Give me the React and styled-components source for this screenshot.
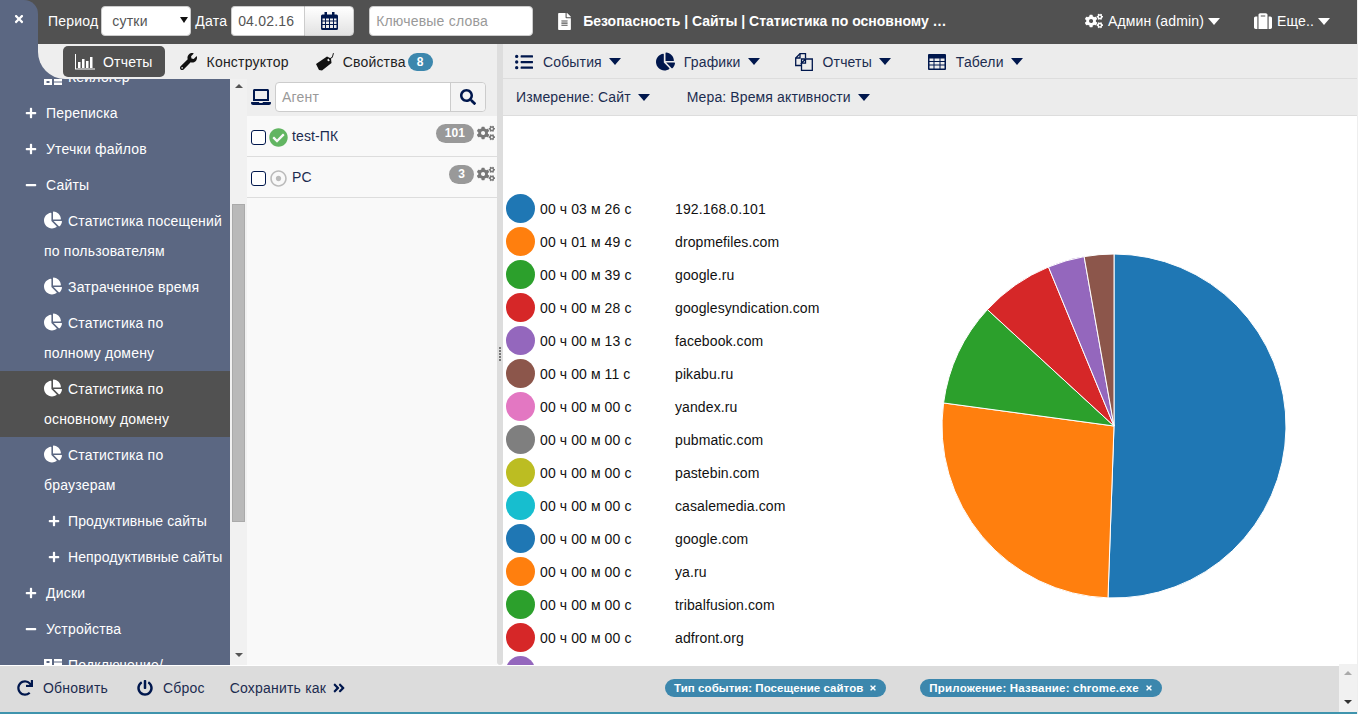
import styled, { createGlobalStyle } from "styled-components";
import {
  FaTimes, FaFileAlt, FaCogs, FaSuitcase, FaWrench,
  FaLaptop, FaSearch, FaCheckCircle, FaRegDotCircle, FaListUl, FaChartPie,
  FaRedo, FaPowerOff, FaAngleDoubleRight, FaPlus, FaMinus,
} from "react-icons/fa";

const GlobalStyle = createGlobalStyle`
  html, body { margin: 0; height: 100%; overflow: hidden; background: #eee; }
  body { font-family: "Liberation Sans", Arial, sans-serif; font-size: 14px; color: #222; letter-spacing: 0.2px; }
  #root { height: 100%; }
  * { box-sizing: border-box; }
`;

const Page = styled.div`
  width: 1357px;
  height: 714px;
  display: flex;
  flex-direction: column;
  overflow: hidden;
  background: #fff;
`;

const Top = styled.div`
  display: flex;
  height: 79px;
  flex: none;
  background: #515151;
`;

const CloseTab = styled.div`
  width: 38px;
  background: #5b6782;
  border-top-right-radius: 14px;
  color: #fff;
  font-size: 12px;
  padding: 13px 0 0 13px;
`;

const TopRight = styled.div`
  flex: 1;
  min-width: 0;
  display: flex;
  flex-direction: column;
`;

const Header = styled.header`
  height: 44px;
  display: flex;
  align-items: center;
  color: #fff;
  padding: 0 27px 2px 10px;
`;

const HeaderLabel = styled.span`
  margin-right: ${p => p.$gap}px;
`;

const Field = styled.div`
  height: 30px;
  background: #fff;
  border: 1px solid #ccc;
  border-radius: 4px;
  color: ${p => (p.$muted ? "#999" : "#555")};
  width: ${p => p.$width}px;
  display: flex;
  align-items: center;
  padding-left: ${p => p.$pad}px;
  margin-right: ${p => p.$gap}px;
  position: relative;
`;

const SelectArrow = styled.span`
  position: absolute;
  right: 2px;
  top: 10px;
  width: 0;
  height: 0;
  border: 4px solid transparent;
  border-top: 6px solid #111;
  border-bottom: 0;
`;

const DateField = styled(Field)`
  border-radius: 4px 0 0 4px;
  border-right: 0;
  margin-right: 0;
`;

const CalendarButton = styled.div`
  width: 50px;
  height: 30px;
  background: linear-gradient(#fff, #e2e2e2);
  border: 1px solid #ccc;
  border-radius: 0 4px 4px 0;
  color: #00174d;
  display: flex;
  align-items: center;
  justify-content: center;
  margin-right: 15px;
`;

const Title = styled.div`
  display: flex;
  align-items: center;
  gap: 10px;
  margin-left: 23px;
  font-weight: bold;
  letter-spacing: 0;
  width: 392px;
  min-width: 0;
  svg { font-size: 17px; flex: none; }
  span { white-space: nowrap; overflow: hidden; text-overflow: ellipsis; }
`;

const HeaderMenu = styled.div`
  display: flex;
  align-items: center;
  margin-left: ${p => (p.$push ? "auto" : "34px")};
  gap: 5px;
  letter-spacing: 0.15px;
  svg { font-size: 18px; }
`;

const CaretWhite = styled.i`
  width: 0;
  height: 0;
  border: 6px solid transparent;
  border-top: 7px solid #fff;
  border-bottom: 0;
  margin-left: -1px;
`;

const SubBar = styled.div`
  height: 35px;
  background: #5b6782;
  display: flex;
`;

const TabsBar = styled.div`
  width: 459px;
  flex: none;
  background: #eee;
  border-bottom-left-radius: 27px;
  display: flex;
  align-items: center;
  padding-left: 25px;
`;

const ReportTab = styled.div`
  height: 31px;
  display: flex;
  align-items: center;
  gap: ${p => p.$iconGap}px;
  padding: 0 12px;
  border-radius: 5px;
  margin-right: ${p => p.$gap}px;
  color: ${p => (p.$active ? "#fff" : "#222")};
  background: ${p => (p.$active ? "#515151" : "transparent")};
  svg { color: ${p => (p.$active ? "#fff" : "#111")}; flex: none; }
`;

const Count = styled.span`
  background: #3c87ad;
  color: #fff;
  font-size: 12px;
  font-weight: bold;
  border-radius: 10px;
  padding: 2px 9px;
  margin-left: -7px;
`;

const Splitter = styled.div`
  width: 6px;
  flex: none;
  background: #ddd;
  border-radius: 0 0 3px 3px;
  display: flex;
  align-items: center;
  justify-content: center;
  padding-bottom: 36px;
`;

const Grip = styled.span`
  width: 2px;
  height: 14px;
  background: repeating-linear-gradient(#777 0 2px, transparent 2px 3px);
`;

const TopSplit = styled.div`
  width: 6px;
  flex: none;
  background: #ddd;
`;

const ToolBar = styled.div`
  flex: 1;
  background: #ececec;
  border-bottom: 1px solid #ddd;
  display: flex;
  align-items: center;
  padding: 1px 0 0 12px;
`;

const Tool = styled.div`
  display: flex;
  align-items: center;
  color: #1c2c50;
  letter-spacing: 0.15px;
  margin-right: ${p => p.$gap}px;
  svg { color: #00174d; margin-right: 10px; flex: none; }
`;

const ListIcon = styled(FaListUl)`
  font-size: 18px;
`;

const PieIcon = styled(FaChartPie)`
  font-size: 19px;
  && { margin-right: 9px; }
`;

const Caret = styled.i`
  width: 0;
  height: 0;
  border: 6px solid transparent;
  border-top: 7px solid #00174d;
  border-bottom: 0;
  margin-left: 7px;
`;

const MeasureBar = styled.div`
  height: 37px;
  flex: none;
  background: #ececec;
  border-bottom: 1px solid #ddd;
  display: flex;
  align-items: center;
  padding-left: 13px;
  gap: 37px;
`;

const Measure = styled.div`
  display: flex;
  align-items: center;
  color: #1c2c50;
  letter-spacing: 0.12px;
`;

const Body = styled.div`
  flex: 1;
  min-height: 0;
  display: flex;
`;

const Sidebar = styled.nav`
  width: 230px;
  flex: none;
  background: #5b6782;
  overflow: hidden;
  color: #fff;
`;

const MenuList = styled.div`
  margin-top: -20px;
`;

const MenuRow = styled.div`
  padding: 3px 0 3px ${p => (p.$sub ? 44 : 25)}px;
  line-height: 30px;
  white-space: pre-line;
  background: ${p => (p.$active ? "#515151" : "transparent")};
  svg {
    font-size: ${p => (p.$sub ? 18 : 12)}px;
    margin-right: ${p => (p.$sub ? 6 : 9)}px;
    vertical-align: ${p => (p.$sub ? -3 : -1)}px;
  }
`;

const PlusRow = styled(MenuRow)`
  padding-left: 48px;
  letter-spacing: 0.1px;
  svg { font-size: 12px; margin-right: 8px; vertical-align: -1px; }
`;

const Scroll = styled.div`
  width: 17px;
  flex: none;
  background: #f1f1f1;
  display: flex;
  flex-direction: column;
  align-items: center;
`;

const ScrollArrow = styled.i`
  width: 0;
  height: 0;
  margin-top: ${p => p.$mt || 0}px;
  border: 4px solid transparent;
  ${p => (p.$up ? `border-bottom: 4px solid ${p.$color}; border-top: 0;` : `border-top: 4px solid ${p.$color}; border-bottom: 0;`)}
`;

const Thumb = styled.div`
  width: 13px;
  height: 318px;
  margin-top: 116px;
  background: #b9b9b9;
  border: 1px solid #aaa;
`;

const AgentPanel = styled.section`
  width: 250px;
  flex: none;
  background: #f9f9f9;
`;

const SearchRow = styled.div`
  height: 37px;
  background: #eee;
  display: flex;
  align-items: center;
  padding: 0 11px 1px 4px;
  gap: 4px;
  > svg { font-size: 20px; color: #00174d; }
`;

const SearchBox = styled.div`
  flex: 1;
  height: 30px;
  display: flex;
  background: #fff;
  border: 1px solid #ccc;
  border-radius: 4px;
  color: #999;
  align-items: center;
  padding-left: 6px;
`;

const SearchButton = styled.div`
  margin-left: auto;
  width: 35px;
  height: 28px;
  border-left: 1px solid #ccc;
  background: #f4f4f4;
  color: #00174d;
  font-size: 16px;
  display: flex;
  align-items: center;
  justify-content: center;
  border-radius: 0 4px 4px 0;
`;

const AgentRow = styled.div`
  height: 41px;
  border-bottom: 1px solid #ddd;
  display: flex;
  align-items: center;
  padding: 0 2px 0 4px;
  position: relative;
  color: #1c2c50;
  letter-spacing: 0.1px;
`;

const Check = styled.span`
  width: 15px;
  height: 15px;
  border: 1px solid #00174d;
  border-radius: 3px;
  background: #fff;
  margin: 2px 3px 0 0;
`;

const StatusIcon = styled.span`
  font-size: ${p => p.$size}px;
  width: 19px;
  text-align: center;
  line-height: 0;
  margin: 2px 4px 0 0;
  color: ${p => p.$color};
`;

const Badge = styled.span`
  position: absolute;
  right: 23px;
  top: 8px;
  height: 19px;
  border-radius: 10px;
  padding: 0 9px;
  background: #999;
  color: #fff;
  font-size: 12px;
  font-weight: bold;
  line-height: 18px;
`;

const GearIcon = styled.span`
  position: absolute;
  right: 2px;
  top: 8px;
  font-size: 18px;
  line-height: 0;
  color: #777;
`;

const Main = styled.main`
  flex: 1;
  min-width: 0;
  display: flex;
  flex-direction: column;
  background: #fff;
  overflow: hidden;
`;

const Chart = styled.div`
  flex: 1;
  min-height: 0;
  display: flex;
  overflow: hidden;
`;

const Legend = styled.div`
  width: 438px;
  flex: none;
  padding: 76px 0 0 3px;
`;

const LegendRow = styled.div`
  height: 33px;
  flex: none;
  display: flex;
  align-items: center;
  color: #111;
  letter-spacing: 0.1px;
`;

const Dot = styled.span`
  width: 29px;
  height: 29px;
  border-radius: 50%;
  flex: none;
  margin-right: 5px;
  background: ${p => p.$color};
`;

const Time = styled.span`
  width: 135px;
  flex: none;
`;

const Pie = styled.svg`
  width: 346px;
  height: 346px;
  flex: none;
  margin-top: 137px;
`;

const Footer = styled.footer`
  height: 49px;
  flex: none;
  border-top: 1px solid #fff;
  border-bottom: 2px solid #3f94ad;
  background: #dcdcdc;
  display: flex;
  align-items: center;
  position: relative;
  padding: 0 0 2px 17px;
`;

const FooterButton = styled.div`
  display: flex;
  align-items: center;
  color: #1c2c50;
  margin-right: ${p => p.$gap}px;
  svg { font-size: 16px; color: #00174d; margin-right: 10px; }
`;

const SaveAs = styled(FooterButton)`
  svg { margin: 0 0 0 6px; font-size: 14px; }
`;

const Chip = styled.div`
  height: 18px;
  background: #3c87ad;
  color: #fff;
  font-size: 11.5px;
  font-weight: bold;
  letter-spacing: ${p => p.$track}px;
  border-radius: 9px;
  padding: 0 9px;
  display: flex;
  align-items: center;
  margin-right: 34px;
  gap: 6px;
  svg { font-size: 8px; }
`;

const Chips = styled.div`
  display: flex;
  margin-left: 319px;
`;

const FooterScroll = styled.div`
  position: absolute;
  right: 0;
  top: -2px;
  bottom: 0;
  width: 18px;
  background: #f1f1f1;
  display: flex;
  flex-direction: column;
  align-items: center;
  i:last-child { margin-top: auto; margin-bottom: 8px; }
`;

const BarsIcon = () => (
  <svg width="20" height="16" viewBox="0 0 20 16" fill="currentColor">
    <path d="M0 0h1v14.5h19v1H0z" />
    <path d="M3 8h2.500v6H3zM7 5h2.500v9H7zM11 7h2.500v7H11zM15 3h2.500v11H15z" />
  </svg>
);

const CalendarIcon = () => (
  <svg width="17" height="18" viewBox="0 0 17 18" fill="currentColor">
    <path fillRule="evenodd" d="M1.500 2.500h14a1.500 1.500 0 0 1 1.500 1.500v12.500a1.500 1.500 0 0 1-1.500 1.500h-14A1.500 1.500 0 0 1 0 16.500V4a1.500 1.500 0 0 1 1.500-1.500zM1.500 6.500v2h2.500v-2zM5 6.500v2h3v-2zM9 6.500v2h3v-2zM13 6.500v2h2.500v-2zM1.500 9.500v2.500h2.500V9.500zM5 9.500v2.500h3V9.500zM9 9.500v2.500h3V9.500zM13 9.500v2.500h2.500V9.500zM1.500 13v3h2.500v-3zM5 13v3h3v-3zM9 13v3h3v-3zM13 13v3h2.500v-3z" />
    <path d="M3.500 0h2.500v4.500H3.500zM11 0h2.500v4.500H11z" />
  </svg>
);

const TagIcon = () => (
  <svg width="18" height="18" viewBox="0 0 18 18" fill="currentColor">
    <path fillRule="evenodd" d="M0 11 11 3.500l4 2 .5 4.500L6 17.500l-3-.5zM12.500 5.800a1.200 1.200 0 1 0 .1 0z" />
    <path d="M12.800 6.200 16 3.800 17 0l.9.3-1.100 4-3.500 2.600z" />
  </svg>
);

const FilesIcon = () => (
  <svg width="18" height="18" viewBox="0 0 18 18" fill="none" stroke="currentColor" strokeWidth="1.300">
    <path d="M6 12.500H.7V5L5 .7h5.500V5" />
    <path d="M.7 5H5V.7" />
    <path d="M6.500 6h10.800v11.300H6.500zM6.500 10.200 10.500 6v4.200z" />
  </svg>
);

const GridIcon = () => (
  <svg width="18" height="16" viewBox="0 0 18 16" fill="currentColor">
    <path fillRule="evenodd" d="M1 0h16a1 1 0 0 1 1 1v14a1 1 0 0 1-1 1H1a1 1 0 0 1-1-1V1a1 1 0 0 1 1-1zM1.500 4.500v2.500h4V4.500zM6.500 4.500v2.500h5V4.500zM12.500 4.500v2.500h4V4.500zM1.500 8v2.500h4V8zM6.500 8v2.500h5V8zM12.500 8v2.500h4V8zM1.500 11.500v3h4v-3zM6.500 11.500v3h5v-3zM12.500 11.500v3h4v-3z" />
  </svg>
);

const ListBoxIcon = () => (
  <svg width="18" height="14" viewBox="0 0 18 14" fill="currentColor">
    <path fillRule="evenodd" d="M0 0h8v6H0zM2.500 2v2h3V2z" />
    <path d="M10 0h8v2.500h-8zM10 3.500h8V6h-8z" />
    <path fillRule="evenodd" d="M0 8h8v6H0zM2.500 10v2h3v-2z" />
    <path d="M10 8h8v2.500h-8zM10 11.500h8V14h-8z" />
  </svg>
);

const ROWS = [
  ["00 ч 03 м 26 с", "192.168.0.101", "#1f77b4"],
  ["00 ч 01 м 49 с", "dropmefiles.com", "#ff7f0e"],
  ["00 ч 00 м 39 с", "google.ru", "#2ca02c"],
  ["00 ч 00 м 28 с", "googlesyndication.com", "#d62728"],
  ["00 ч 00 м 13 с", "facebook.com", "#9467bd"],
  ["00 ч 00 м 11 с", "pikabu.ru", "#8c564b"],
  ["00 ч 00 м 00 с", "yandex.ru", "#e377c2"],
  ["00 ч 00 м 00 с", "pubmatic.com", "#7f7f7f"],
  ["00 ч 00 м 00 с", "pastebin.com", "#bcbd22"],
  ["00 ч 00 м 00 с", "casalemedia.com", "#17becf"],
  ["00 ч 00 м 00 с", "google.com", "#1f77b4"],
  ["00 ч 00 м 00 с", "ya.ru", "#ff7f0e"],
  ["00 ч 00 м 00 с", "tribalfusion.com", "#2ca02c"],
  ["00 ч 00 м 00 с", "adfront.org", "#d62728"],
  ["", "", "#9467bd"],
];

// end angle of each slice, degrees clockwise from the top
const SLICES = [
  [182, "#1f77b4"],
  [277.7, "#ff7f0e"],
  [312.6, "#2ca02c"],
  [337.6, "#d62728"],
  [350, "#9467bd"],
  [360, "#8c564b"],
];

function slicePaths() {
  let a = 0;
  return SLICES.map(([end, color]) => {
    const start = a;
    a = end;
    const pt = deg => {
      const t = (deg * Math.PI) / 180;
      return `${173 + 172 * Math.sin(t)} ${173 - 172 * Math.cos(t)}`;
    };
    const large = a - start > 180 ? 1 : 0;
    return <path key={color} d={`M173 173L${pt(start)}A172 172 0 ${large} 1 ${pt(a)}Z`} fill={color} stroke="#fff" strokeWidth="1" />;
  });
}

export default function App() {
  return (
    <Page>
      <GlobalStyle />
      <Top>
        <CloseTab><FaTimes /></CloseTab>
        <TopRight>
          <Header>
            <HeaderLabel $gap={3}>Период</HeaderLabel>
            <Field $width={90} $pad={10} $gap={4}>сутки<SelectArrow /></Field>
            <HeaderLabel $gap={4}>Дата</HeaderLabel>
            <DateField $width={73} $pad={6}>04.02.16</DateField>
            <CalendarButton><CalendarIcon /></CalendarButton>
            <Field $width={164} $pad={6} $gap={0} $muted>Ключевые слова</Field>
            <Title><FaFileAlt /><span>Безопасность | Сайты | Статистика по основному домену</span></Title>
            <HeaderMenu $push><FaCogs />Админ (admin)<CaretWhite /></HeaderMenu>
            <HeaderMenu><FaSuitcase />Еще..<CaretWhite /></HeaderMenu>
          </Header>
          <SubBar>
            <TabsBar>
              <ReportTab $active $gap={3} $iconGap={8}><BarsIcon />Отчеты</ReportTab>
              <ReportTab $gap={3} $iconGap={10}><FaWrench size={17} />Конструктор</ReportTab>
              <ReportTab $gap={0} $iconGap={9}><TagIcon />Свойства <Count>8</Count></ReportTab>
            </TabsBar>
            <TopSplit />
            <ToolBar>
              <Tool $gap={35}><ListIcon />События<Caret /></Tool>
              <Tool $gap={35}><PieIcon />Графики<Caret /></Tool>
              <Tool $gap={37}><FilesIcon />Отчеты<Caret /></Tool>
              <Tool $gap={0}><GridIcon />Табели<Caret /></Tool>
            </ToolBar>
          </SubBar>
        </TopRight>
      </Top>
      <Body>
        <Sidebar>
          <MenuList>
            <MenuRow $sub><ListBoxIcon />Кейлогер</MenuRow>
            <MenuRow><FaPlus />Переписка</MenuRow>
            <MenuRow><FaPlus />Утечки файлов</MenuRow>
            <MenuRow><FaMinus />Сайты</MenuRow>
            <MenuRow $sub><FaChartPie />{"Статистика посещений\nпо пользователям"}</MenuRow>
            <MenuRow $sub><FaChartPie />Затраченное время</MenuRow>
            <MenuRow $sub><FaChartPie />{"Статистика по\nполному домену"}</MenuRow>
            <MenuRow $sub $active><FaChartPie />{"Статистика по\nосновному домену"}</MenuRow>
            <MenuRow $sub><FaChartPie />{"Статистика по\nбраузерам"}</MenuRow>
            <PlusRow><FaPlus />Продуктивные сайты</PlusRow>
            <PlusRow><FaPlus />Непродуктивные сайты</PlusRow>
            <MenuRow><FaPlus />Диски</MenuRow>
            <MenuRow><FaMinus />Устройства</MenuRow>
            <MenuRow $sub><ListBoxIcon />Подключение/</MenuRow>
          </MenuList>
        </Sidebar>
        <Scroll>
          <ScrollArrow $up $color="#555" $mt={5} />
          <Thumb />
          <ScrollArrow $color="#555" $mt={131} />
        </Scroll>
        <AgentPanel>
          <SearchRow>
            <FaLaptop />
            <SearchBox>Агент<SearchButton><FaSearch /></SearchButton></SearchBox>
          </SearchRow>
          <AgentRow>
            <Check />
            <StatusIcon $color="#62b562" $size={19}><FaCheckCircle /></StatusIcon>
            test-ПК
            <Badge>101</Badge>
            <GearIcon><FaCogs /></GearIcon>
          </AgentRow>
          <AgentRow>
            <Check />
            <StatusIcon $color="#bbb" $size={17}><FaRegDotCircle /></StatusIcon>
            PC
            <Badge>3</Badge>
            <GearIcon><FaCogs /></GearIcon>
          </AgentRow>
        </AgentPanel>
        <Splitter><Grip /></Splitter>
        <Main>
          <MeasureBar>
            <Measure>Измерение: Сайт<Caret /></Measure>
            <Measure>Мера: Время активности<Caret /></Measure>
          </MeasureBar>
          <Chart>
            <Legend>
              {ROWS.map(([time, name, color], i) => (
                <LegendRow key={i}>
                  <Dot $color={color} />
                  <Time>{time}</Time>
                  {name}
                </LegendRow>
              ))}
            </Legend>
            <Pie viewBox="0 0 346 346">{slicePaths()}</Pie>
          </Chart>
        </Main>
      </Body>
      <Footer>
        <FooterButton $gap={29}><FaRedo />Обновить</FooterButton>
        <FooterButton $gap={25}><FaPowerOff />Сброс</FooterButton>
        <SaveAs $gap={0}>Сохранить как<FaAngleDoubleRight /></SaveAs>
        <Chips>
          <Chip $track={0.05}>Тип события: Посещение сайтов<FaTimes /></Chip>
          <Chip $track={0.19}>Приложение: Название: chrome.exe<FaTimes /></Chip>
        </Chips>
        <FooterScroll>
          <ScrollArrow $up $color="#aaa" $mt={7} />
          <ScrollArrow $color="#333" />
        </FooterScroll>
      </Footer>
    </Page>
  );
}
